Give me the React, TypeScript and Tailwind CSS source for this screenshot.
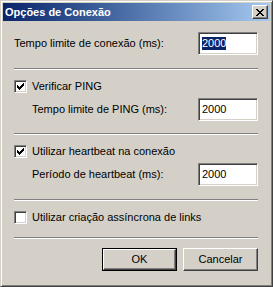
import React from "react";

const sunken =
  "border border-t-[#808080] border-l-[#808080] border-r-white border-b-white shadow-[inset_1px_1px_0_#404040,inset_-1px_-1px_0_#d4d0c8]";

function CloseX() {
  const rows = [
    [0, 1, 6, 7],
    [1, 2, 5, 6],
    [2, 3, 4, 5],
    [3, 4],
    [2, 3, 4, 5],
    [1, 2, 5, 6],
    [0, 1, 6, 7],
  ];
  return (
    <svg width="8" height="7" viewBox="0 0 8 7" shapeRendering="crispEdges">
      {rows.map((r, y) =>
        r.map((x) => <rect key={`${x}-${y}`} x={x} y={y} width="1" height="1" fill="#000" />)
      )}
    </svg>
  );
}

function Check() {
  const rows: number[][] = [
    [6],
    [5, 6],
    [0, 4, 5, 6],
    [0, 1, 3, 4, 5],
    [0, 1, 2, 3, 4],
    [1, 2, 3],
    [2],
  ];
  return (
    <svg width="7" height="7" viewBox="0 0 7 7" shapeRendering="crispEdges">
      {rows.map((r, y) =>
        r.map((x) => <rect key={`${x}-${y}`} x={x} y={y} width="1" height="1" fill="#000" />)
      )}
    </svg>
  );
}

function Checkbox({ checked, label }: { checked: boolean; label: string }) {
  return (
    <div className="flex items-center h-[13px]">
      <div className={`w-[13px] h-[13px] bg-white flex items-center justify-center shrink-0 ${sunken}`}>
        {checked && <Check />}
      </div>
      <span className="ml-[5px] leading-[13px]">{label}</span>
    </div>
  );
}

function Field({ label, indent, selected }: { label: string; indent?: boolean; selected?: boolean }) {
  return (
    <div className={`flex items-center justify-between h-[23px] ${indent ? "pl-[18px]" : ""}`}>
      <span className="leading-[13px]">{label}</span>
      <div className={`w-[60px] h-[23px] bg-white flex items-center pl-[3px] ${sunken}`}>
        <span
          className={`leading-[13px] h-[13px] ${selected ? "bg-[#0a246a] text-white" : ""}`}
        >
          2000
        </span>
      </div>
    </div>
  );
}

function Sep() {
  return <div className="h-[2px] border-t border-t-[#808080] border-b border-b-white" />;
}

function Button({ label, isDefault }: { label: string; isDefault?: boolean }) {
  if (isDefault) {
    return (
      <div className="w-[75px] h-[23px] border border-black">
        <div className="w-full h-full border border-t-white border-l-white border-r-[#404040] border-b-[#404040] shadow-[inset_-1px_-1px_0_#808080] flex items-center justify-center">
          {label}
        </div>
      </div>
    );
  }
  return (
    <div className="w-[75px] h-[23px] border border-t-white border-l-white border-r-[#404040] border-b-[#404040] shadow-[inset_-1px_-1px_0_#808080] flex items-center justify-center">
      {label}
    </div>
  );
}

export default function App() {
  return (
    <div
      className="w-[273px] h-[287px] bg-[#d4d0c8] border border-t-[#d4d0c8] border-l-[#d4d0c8] border-r-[#404040] border-b-[#404040] shadow-[inset_1px_1px_0_#ffffff,inset_-1px_-1px_0_#808080] p-[2px] flex flex-col text-[11px] text-black"
      style={{ fontFamily: '"Liberation Sans", Arial, sans-serif' }}
    >
      <div className="h-[18px] shrink-0 bg-gradient-to-r from-[#0a246a] to-[#a6caf0] flex items-center justify-between pl-[2px] pr-[2px]">
        <span className="text-white font-bold leading-[13px]">Opções de Conexão</span>
        <div className="w-[16px] h-[14px] bg-[#d4d0c8] border border-t-white border-l-white border-r-[#404040] border-b-[#404040] shadow-[inset_-1px_-1px_0_#808080] flex items-center justify-center">
          <CloseX />
        </div>
      </div>
      <div className="flex-1 flex flex-col pl-[11px] pr-[12px] pt-[11px]">
        <Field label="Tempo limite de conexão (ms):" selected />
        <div className="mt-[13px]"><Sep /></div>
        <div className="mt-[10px]"><Checkbox checked label="Verificar PING" /></div>
        <div className="mt-[5px]"><Field label="Tempo limite de PING (ms):" indent /></div>
        <div className="mt-[12px]"><Sep /></div>
        <div className="mt-[10px]"><Checkbox checked label="Utilizar heartbeat na conexão" /></div>
        <div className="mt-[5px]"><Field label="Período de heartbeat (ms):" indent /></div>
        <div className="mt-[13px]"><Sep /></div>
        <div className="mt-[10px]"><Checkbox checked={false} label="Utilizar criação assíncrona de links" /></div>
        <div className="mt-[13px]"><Sep /></div>
        <div className="mt-[9px] flex justify-end gap-[6px]">
          <Button label="OK" isDefault />
          <Button label="Cancelar" />
        </div>
      </div>
    </div>
  );
}
